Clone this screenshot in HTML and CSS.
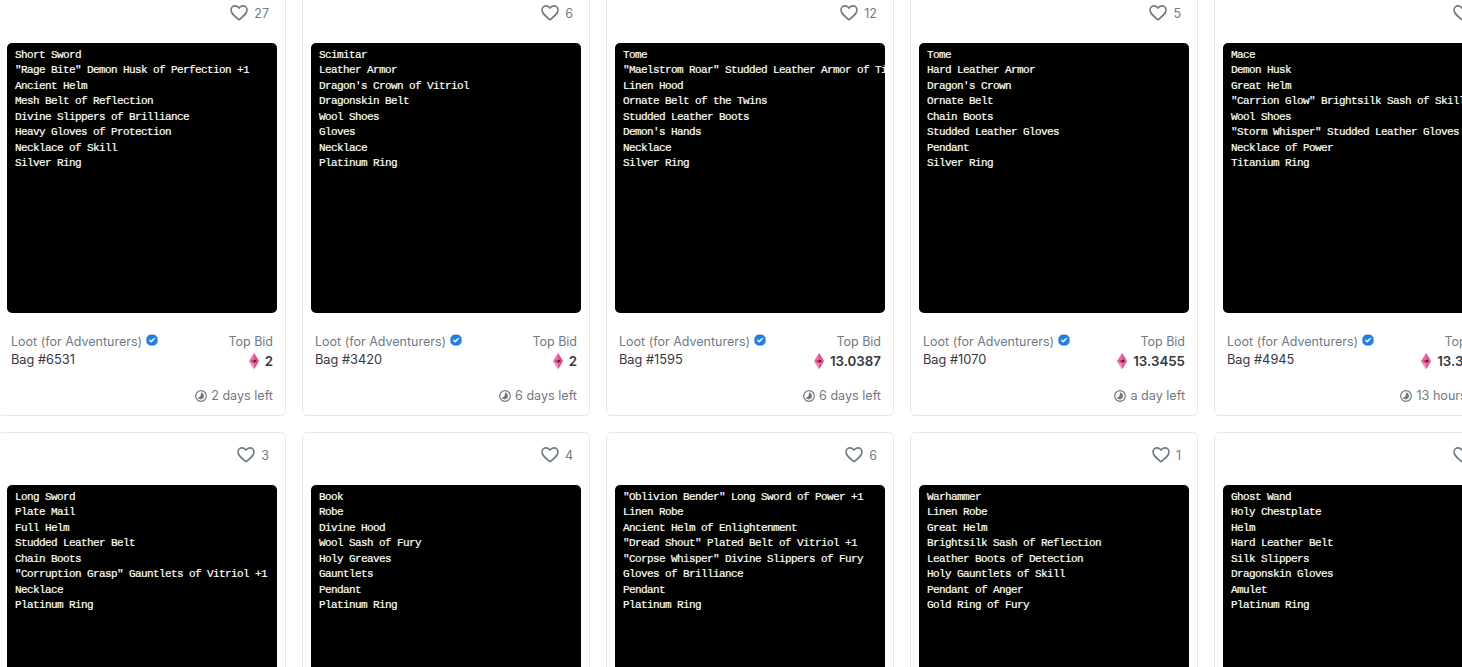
FILE: index.html
```html
<!DOCTYPE html>
<html lang="en">
<head>
<meta charset="utf-8">
<title>Loot (for Adventurers)</title>
<link rel="stylesheet" href="styles.css">
</head>
<body>
<svg class="defs" width="0" height="0" aria-hidden="true">
  <defs>
    <symbol id="heart" viewBox="0 0 20 18"><path d="M10 16.6 C4.5 12.2 1 9.4 1 5.7 C1 3 3.1 1 5.6 1 C7.4 1 9.1 2 10 3.6 C10.9 2 12.6 1 14.4 1 C16.9 1 19 3 19 5.7 C19 9.4 15.5 12.2 10 16.6 Z" fill="none" stroke="#707a83" stroke-width="1.8" stroke-linejoin="round"/></symbol>
    <symbol id="badge" viewBox="0 0 12 12"><path d="M6 0 7.5 1 9.3 .8 10.1 2.3 11.6 3.2 11.3 5 12 6 11.3 7.6 11.6 9 10.1 9.9 9.3 11.2 7.5 11.2 6 12 4.5 11.2 2.7 11.2 1.9 9.9 .4 9 .7 7.6 0 6 .7 5 .4 3.2 1.9 2.3 2.7 .8 4.5 1Z" fill="#2081e2"/><path d="M3.5 6.1 5.2 7.8 8.6 4.3" fill="none" stroke="#fff" stroke-width="1.4"/></symbol>
    <symbol id="eth" viewBox="0 0 10 16"><path d="M5 0 10 8 5 16 0 8Z" fill="#ee6fa4"/><path d="M5 0 5 6 10 8Z" fill="#e0508c"/><path d="M5 6.5 8.5 8 5 10Z" fill="#4a1f34"/><path d="M5 6.5 1.5 8 5 10Z" fill="#b93a72"/><path d="M5 12 10 8.6 5 16Z" fill="#d94c88"/><path d="M5 12 0 8.6 5 16Z" fill="#f495bd"/></symbol>
    <symbol id="clock" viewBox="0 0 12 12"><circle cx="6" cy="6" r="5.3" fill="none" stroke="#707a83" stroke-width="1.2"/><path d="M6 2.6A3.4 3.4 0 1 1 2.6 7.6C4.5 7.6 6 6.5 6 2.6Z" fill="#707a83"/></symbol>
  </defs>
</svg>
<main class="grid">
  <article class="card">
    <div class="likes"><svg class="heart"><use href="#heart"/></svg><span>27</span></div>
    <div class="art">Short Sword<br>"Rage Bite" Demon Husk of Perfection +1<br>Ancient Helm<br>Mesh Belt of Reflection<br>Divine Slippers of Brilliance<br>Heavy Gloves of Protection<br>Necklace of Skill<br>Silver Ring</div>
    <div class="info"><div class="col"><div class="coll">Loot (for Adventurers)<svg class="badge"><use href="#badge"/></svg></div><div class="name">Bag #6531</div></div><div class="col end"><div class="label">Top Bid</div><div class="price"><svg class="eth"><use href="#eth"/></svg>2</div></div></div>
    <div class="left"><svg class="clock"><use href="#clock"/></svg>2 days left</div>
  </article>
  <article class="card">
    <div class="likes"><svg class="heart"><use href="#heart"/></svg><span>6</span></div>
    <div class="art">Scimitar<br>Leather Armor<br>Dragon's Crown of Vitriol<br>Dragonskin Belt<br>Wool Shoes<br>Gloves<br>Necklace<br>Platinum Ring</div>
    <div class="info"><div class="col"><div class="coll">Loot (for Adventurers)<svg class="badge"><use href="#badge"/></svg></div><div class="name">Bag #3420</div></div><div class="col end"><div class="label">Top Bid</div><div class="price"><svg class="eth"><use href="#eth"/></svg>2</div></div></div>
    <div class="left"><svg class="clock"><use href="#clock"/></svg>6 days left</div>
  </article>
  <article class="card">
    <div class="likes"><svg class="heart"><use href="#heart"/></svg><span>12</span></div>
    <div class="art">Tome<br>"Maelstrom Roar" Studded Leather Armor of Titans<br>Linen Hood<br>Ornate Belt of the Twins<br>Studded Leather Boots<br>Demon's Hands<br>Necklace<br>Silver Ring</div>
    <div class="info"><div class="col"><div class="coll">Loot (for Adventurers)<svg class="badge"><use href="#badge"/></svg></div><div class="name">Bag #1595</div></div><div class="col end"><div class="label">Top Bid</div><div class="price"><svg class="eth"><use href="#eth"/></svg>13.0387</div></div></div>
    <div class="left"><svg class="clock"><use href="#clock"/></svg>6 days left</div>
  </article>
  <article class="card">
    <div class="likes"><svg class="heart"><use href="#heart"/></svg><span>5</span></div>
    <div class="art">Tome<br>Hard Leather Armor<br>Dragon's Crown<br>Ornate Belt<br>Chain Boots<br>Studded Leather Gloves<br>Pendant<br>Silver Ring</div>
    <div class="info"><div class="col"><div class="coll">Loot (for Adventurers)<svg class="badge"><use href="#badge"/></svg></div><div class="name">Bag #1070</div></div><div class="col end"><div class="label">Top Bid</div><div class="price"><svg class="eth"><use href="#eth"/></svg>13.3455</div></div></div>
    <div class="left"><svg class="clock"><use href="#clock"/></svg>a day left</div>
  </article>
  <article class="card">
    <div class="likes"><svg class="heart"><use href="#heart"/></svg><span>9</span></div>
    <div class="art">Mace<br>Demon Husk<br>Great Helm<br>"Carrion Glow" Brightsilk Sash of Skill<br>Wool Shoes<br>"Storm Whisper" Studded Leather Gloves<br>Necklace of Power<br>Titanium Ring</div>
    <div class="info"><div class="col"><div class="coll">Loot (for Adventurers)<svg class="badge"><use href="#badge"/></svg></div><div class="name">Bag #4945</div></div><div class="col end"><div class="label">Top Bid</div><div class="price"><svg class="eth"><use href="#eth"/></svg>13.3455</div></div></div>
    <div class="left"><svg class="clock"><use href="#clock"/></svg>13 hours left</div>
  </article>
  <article class="card">
    <div class="likes"><svg class="heart"><use href="#heart"/></svg><span>3</span></div>
    <div class="art">Long Sword<br>Plate Mail<br>Full Helm<br>Studded Leather Belt<br>Chain Boots<br>"Corruption Grasp" Gauntlets of Vitriol +1<br>Necklace<br>Platinum Ring</div>
  </article>
  <article class="card">
    <div class="likes"><svg class="heart"><use href="#heart"/></svg><span>4</span></div>
    <div class="art">Book<br>Robe<br>Divine Hood<br>Wool Sash of Fury<br>Holy Greaves<br>Gauntlets<br>Pendant<br>Platinum Ring</div>
  </article>
  <article class="card">
    <div class="likes"><svg class="heart"><use href="#heart"/></svg><span>6</span></div>
    <div class="art">"Oblivion Bender" Long Sword of Power +1<br>Linen Robe<br>Ancient Helm of Enlightenment<br>"Dread Shout" Plated Belt of Vitriol +1<br>"Corpse Whisper" Divine Slippers of Fury<br>Gloves of Brilliance<br>Pendant<br>Platinum Ring</div>
  </article>
  <article class="card">
    <div class="likes"><svg class="heart"><use href="#heart"/></svg><span>1</span></div>
    <div class="art">Warhammer<br>Linen Robe<br>Great Helm<br>Brightsilk Sash of Reflection<br>Leather Boots of Detection<br>Holy Gauntlets of Skill<br>Pendant of Anger<br>Gold Ring of Fury</div>
  </article>
  <article class="card">
    <div class="likes"><svg class="heart"><use href="#heart"/></svg><span>2</span></div>
    <div class="art">Ghost Wand<br>Holy Chestplate<br>Helm<br>Hard Leather Belt<br>Silk Slippers<br>Dragonskin Gloves<br>Amulet<br>Platinum Ring</div>
  </article>
</main>
</body>
</html>
```
FILE: styles.css
```css
html, body {
  margin: 0;
  height: 100%;
  background: #fff;
  overflow: hidden;
}
.defs {
  display: block;
  height: 0;
}
.grid {
  display: grid;
  grid-template-columns: repeat(5, 288px);
  grid-auto-rows: 426px;
  gap: 16px;
  margin: -10px 0 0 -2px;
  font-family: Inter, "Noto Sans", sans-serif;
}
.card {
  box-sizing: border-box;
  height: 426px;
  border: 1px solid #e5e8eb;
  border-radius: 5px;
  background: #fff;
}
.likes {
  box-sizing: border-box;
  height: 42px;
  margin-bottom: 10px;
  padding: 2px 16px 0 0;
  display: flex;
  justify-content: flex-end;
  align-items: center;
  gap: 6px;
  color: #707a83;
  font-size: 12.5px;
}
.heart {
  width: 18px;
  height: 16px;
}
.art {
  box-sizing: border-box;
  width: 270px;
  height: 270px;
  margin-left: 8px;
  padding: 4.9px 8px;
  background: #000;
  border-radius: 5px;
  overflow: hidden;
  white-space: nowrap;
  color: #fff;
  font-family: "Liberation Mono", monospace;
  font-size: 11px;
  letter-spacing: -0.6px;
  line-height: 15.43px;
  -webkit-text-stroke: 0.2px #fff;
}
.info {
  display: flex;
  justify-content: space-between;
  padding: 20px 12px 0 4px;
  margin-left: 8px;
}
.col {
  display: flex;
  flex-direction: column;
  gap: 3px;
}
.end {
  align-items: flex-end;
}
.coll, .label {
  display: flex;
  align-items: center;
  height: 16px;
  font-size: 12.5px;
  color: #707a83;
}
.badge {
  width: 12px;
  height: 12px;
  margin: 0 0 2px 4px;
}
.name {
  font-size: 12.8px;
  line-height: 16px;
  color: #353840;
}
.price {
  display: flex;
  align-items: center;
  gap: 6px;
  height: 18px;
  font-size: 13.3px;
  font-weight: 600;
  color: #353840;
}
.eth {
  width: 10px;
  height: 16px;
}
.left {
  display: flex;
  justify-content: flex-end;
  align-items: center;
  gap: 4px;
  padding: 18px 12px 0 0;
  font-size: 12.6px;
  color: #707a83;
}
.clock {
  width: 12px;
  height: 12px;
}
```
